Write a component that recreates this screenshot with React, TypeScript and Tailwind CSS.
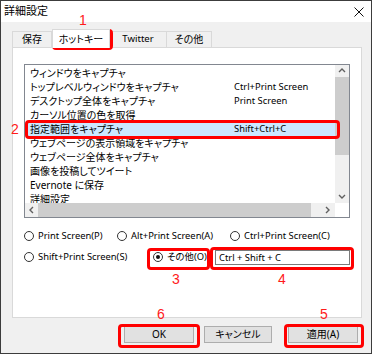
const rows: [string, string][] = [
  ["ウィンドウをキャプチャ", ""],
  ["トップレベルウィンドウをキャプチャ", "Ctrl+Print Screen"],
  ["デスクトップ全体をキャプチャ", "Print Screen"],
  ["カーソル位置の色を取得", ""],
  ["指定範囲をキャプチャ", "Shift+Ctrl+C"],
  ["ウェブページの表示領域をキャプチャ", ""],
  ["ウェブページ全体をキャプチャ", ""],
  ["画像を投稿してツイート", ""],
  ["Evernote に保存", ""],
  ["詳細設定", ""],
];

const Radio = ({ on, label }: { on?: boolean; label: string }) => (
  <div className="flex items-center gap-[4px]">
    <span className="w-[10px] h-[10px] rounded-full border border-[#333] bg-white flex items-center justify-center">
      {on && <span className="w-[4px] h-[4px] rounded-full bg-[#111]" />}
    </span>
    <span className="text-[9.4px]">{label}</span>
  </div>
);

const Chevron = ({ dir }: { dir: "up" | "down" | "left" | "right" }) => {
  const d = {
    up: "M1 5 L4 2 L7 5",
    down: "M1 2 L4 5 L7 2",
    left: "M5 1 L2 4 L5 7",
    right: "M2 1 L5 4 L2 7",
  }[dir];
  return (
    <svg width="8" height="8" viewBox="0 0 8 8">
      <path d={d} fill="none" stroke="#606060" strokeWidth="1.4" />
    </svg>
  );
};

const Num = ({ n, cls }: { n: string; cls: string }) => (
  <div className={`absolute text-[14px] leading-none text-[#ff1a1a] font-['Liberation_Sans',sans-serif] ${cls}`}>{n}</div>
);

const Box = ({ cls }: { cls: string }) => (
  <div className={`absolute border-[3px] border-[#ff0000] rounded-[4px] ${cls}`} />
);

export default function App() {
  return (
    <div className="relative w-[372px] h-[354px] bg-[#f0f0f0] border border-[#3c3c3c] flex flex-col text-[10px] text-black font-['Noto_Sans','Noto_Sans_CJK_JP',sans-serif] [font-feature-settings:'palt']">
      <div className="h-[21px] bg-white flex items-center justify-between pl-[3px] pr-[7px] shrink-0">
        <span className="text-[11px]">詳細設定</span>
        <svg width="10" height="10" viewBox="0 0 10 10">
          <path d="M0.5 0.5 L9.5 9.5 M9.5 0.5 L0.5 9.5" stroke="#111" strokeWidth="1" />
        </svg>
      </div>

      <div className="pl-[11px] pt-[7px]">
        <div className="flex items-end h-[18px]">
          <div className="w-[40px] h-[16px] border border-b-0 border-[#d9d9d9] bg-[#f0f0f0] flex items-center justify-center">保存</div>
          <div className="w-[58px] h-[19px] -mb-[1px] relative z-10 border border-b-0 border-[#d9d9d9] bg-white flex items-center justify-center">ホットキー</div>
          <div className="w-[57px] h-[16px] border border-b-0 border-l-0 border-[#d9d9d9] bg-[#f0f0f0] flex items-center justify-center text-[9.6px]">Twitter</div>
          <div className="w-[45px] h-[16px] border border-b-0 border-l-0 border-[#d9d9d9] bg-[#f0f0f0] flex items-center justify-center">その他</div>
        </div>

        <div className="w-[350px] h-[271px] bg-white border border-[#d9d9d9] pl-[11px] pt-[16px]">
          <div className="w-[326px] h-[154px] border border-[#828790] flex flex-col">
            <div className="flex flex-1 min-h-0">
              <div className="flex-1 overflow-hidden pt-[1px]">
                {rows.map(([a, b], i) => (
                  <div
                    key={a}
                    className={`h-[14px] leading-[14px] flex pl-[5px] whitespace-nowrap ${i === 4 ? "bg-[#cce8ff]" : ""}`}
                  >
                    <span className="w-[204px] shrink-0">{a}</span>
                    <span className="text-[9.4px]">{b}</span>
                  </div>
                ))}
              </div>
              <div className="w-[14px] bg-[#f0f0f0] flex flex-col">
                <div className="h-[12px] flex items-center justify-center"><Chevron dir="up" /></div>
                <div className="h-[78px] bg-[#cdcdcd]" />
                <div className="flex-1" />
                <div className="h-[12px] flex items-center justify-center"><Chevron dir="down" /></div>
              </div>
            </div>
            <div className="h-[14px] flex shrink-0">
              <div className="flex-1 bg-[#f0f0f0] flex">
                <div className="w-[13px] flex items-center justify-center"><Chevron dir="left" /></div>
                <div className="w-[273px] bg-[#cdcdcd]" />
                <div className="flex-1" />
                <div className="w-[14px] flex items-center justify-center"><Chevron dir="right" /></div>
              </div>
              <div className="w-[14px] bg-white" />
            </div>
          </div>

          <div className="mt-[11px] h-[14px] flex items-center">
            <div className="w-[93px]"><Radio label="Print Screen(P)" /></div>
            <div className="w-[113px]"><Radio label="Alt+Print Screen(A)" /></div>
            <Radio label="Ctrl+Print Screen(C)" />
          </div>
          <div className="mt-[7px] h-[15px] flex items-center">
            <div className="w-[129px]"><Radio label="Shift+Print Screen(S)" /></div>
            <div className="w-[62px]"><Radio on label="その他(O)" /></div>
            <div className="w-[135px] h-[15px] border border-[#7a7a7a] bg-white pl-[3px] leading-[13px] text-[9.4px]">Ctrl + Shift + C</div>
          </div>
        </div>
      </div>

      <div className="flex pr-[13px] mt-[8px]">
        <div className="ml-auto w-[70px] h-[17px] bg-[#e1e1e1] border border-[#adadad] flex items-center justify-center">OK</div>
        <div className="ml-[10px] w-[68px] h-[17px] bg-[#e1e1e1] border border-[#adadad] flex items-center justify-center">キャンセル</div>
        <div className="ml-[16px] w-[70px] h-[17px] bg-[#e1e1e1] border border-[#adadad] flex items-center justify-center">適用(A)</div>
      </div>

      <Num n="1" cls="left-[78px] top-[12px]" />
      <Box cls="left-[51px] top-[28px] w-[61px] h-[21px]" />
      <Num n="2" cls="left-[10px] top-[121px]" />
      <Box cls="left-[24px] top-[119px] w-[315px] h-[19px]" />
      <Num n="3" cls="left-[171px] top-[271px]" />
      <Box cls="left-[146px] top-[247px] w-[63px] h-[22px]" />
      <Num n="4" cls="left-[277px] top-[271px]" />
      <Box cls="left-[209px] top-[246px] w-[144px] h-[23px]" />
      <Num n="6" cls="left-[156px] top-[306px]" />
      <Box cls="left-[117px] top-[323px] w-[82px] h-[24px]" />
      <Num n="5" cls="left-[319px] top-[306px]" />
      <Box cls="left-[283px] top-[323px] w-[80px] h-[24px]" />
    </div>
  );
}
